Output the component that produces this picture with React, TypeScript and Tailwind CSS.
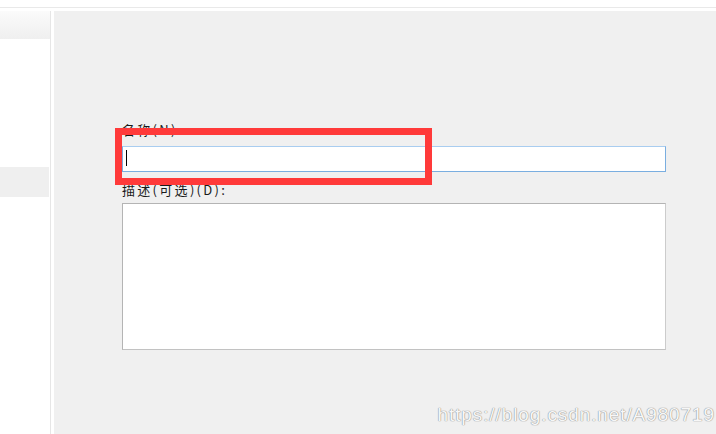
export default function App() {
  return (
    <div className="w-[716px] h-[434px] bg-white flex flex-col overflow-hidden font-['Noto_Sans_CJK_SC',sans-serif]">
      <div className="h-[7px] shrink-0" />
      <div className="h-px bg-[#e9e9e9] shrink-0" />
      <div className="h-[3px] shrink-0" />
      <div className="flex flex-1 min-h-0">
        {/* side list */}
        <aside className="w-[50px] flex flex-col bg-white">
          <div className="h-[28px] bg-gradient-to-b from-[#fbfbfb] to-[#efefef]" />
          <div className="h-[128px]" />
          <div className="h-[30px] w-[49px] bg-[#efefef]" />
        </aside>
        <div className="w-px bg-[#e6e6e6]" />
        <div className="w-[3px] bg-white" />

        {/* form panel */}
        <main className="relative flex-1 bg-[#f0f0f0] pl-[68px] pr-[50px] pt-[111px] flex flex-col">
          <label className="h-[16px] text-[13px] leading-[16px] tracking-[2.3px] text-[#1a1a1a]">名称(N):</label>
          <div className="relative mt-[8px] h-[26px] bg-white border border-[#7aaee0] border-t-[#a9cdf0]">
            <span className="absolute left-[3px] top-[3px] w-px h-[16px] bg-black" />
          </div>
          <label className="mt-[10px] h-[16px] text-[13px] leading-[16px] tracking-[2.3px] text-[#1a1a1a]">描述(可选)(D):</label>
          <div className="mt-[5px] h-[147px] bg-white border border-[#b4b4b4] border-r-[#cccccc] border-b-[#c2c2c2]" />

          <div className="absolute left-[61px] top-[117px] w-[317px] h-[57px] border-[7px] border-[#ff3a3a]" />

          <span className="absolute right-[1px] bottom-[8px] text-[19px] leading-[22px] tracking-[0.9px] text-[#f7f7f7] [text-shadow:0_0_1px_#8a8a8a,0_0_1px_#8a8a8a] font-['Liberation_Sans',sans-serif]">
            https://blog.csdn.net/A980719
          </span>
        </main>
      </div>
    </div>
  );
}
